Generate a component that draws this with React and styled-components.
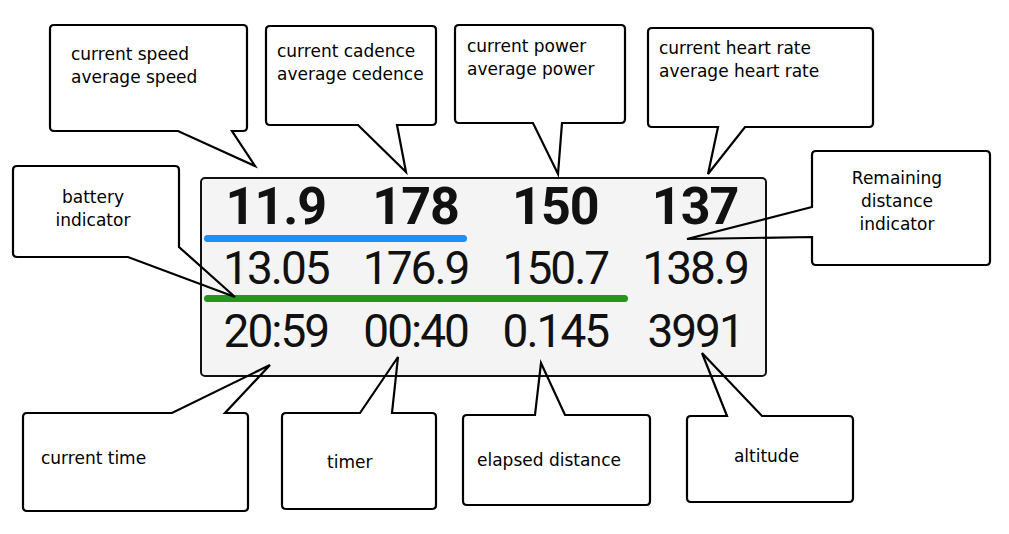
import React from "react"
import styled, { createGlobalStyle } from "styled-components"

const GlobalStyle = createGlobalStyle`
  html, body {
    margin: 0;
    padding: 0;
    background: #fff;
  }
  body {
    font-family: "DejaVu Sans", Verdana, sans-serif;
  }
`

// css
const Canvas = styled.div`
  position: relative;
  width: 1009px;
  height: 534px;
  background: #fff;
  overflow: hidden;
`

const Screen = styled.div`
  position: absolute;
  left: 200px;
  top: 177px;
  width: 567px;
  height: 200px;
  box-sizing: border-box;
  border: 2px solid #111;
  border-radius: 5px;
  background: #f4f4f4;
  padding-top: 2px;
  display: flex;
  flex-direction: column;
  font-family: Roboto, "Liberation Sans", sans-serif;
  color: #111;
`

const Row = styled.div`
  display: grid;
  grid-template-columns: repeat(4, 1fr);
  padding-left: 4px;
  margin-top: ${p => p.$gap || 0}px;
  font-size: ${p => (p.$bold ? 52 : 46)}px;
  line-height: ${p => (p.$bold ? 52 : 46)}px;
  font-weight: ${p => (p.$bold ? 700 : 400)};
  letter-spacing: ${p => (p.$bold ? -1 : -2)}px;
  text-align: center;
  white-space: nowrap;
`

const Bar = styled.div`
  margin-top: ${p => p.$gap}px;
  margin-left: 2px;
  width: ${p => p.$pct}%;
  height: 7px;
  border-radius: 4px;
  background: ${p => p.$color};
`

const Overlay = styled.svg`
  position: absolute;
  left: 0;
  top: 0;
  pointer-events: none;
`

const Label = styled.div`
  position: absolute;
  left: ${p => p.$box[0]}px;
  top: ${p => p.$box[1]}px;
  width: ${p => p.$box[2]}px;
  height: ${p => p.$box[3]}px;
  box-sizing: border-box;
  padding-top: ${p => p.$top}px;
  padding-left: ${p => p.$left || 0}px;
  padding-right: ${p => p.$right || 0}px;
  text-align: ${p => p.$align || "left"};
  font-family: "DejaVu Sans", Verdana, sans-serif;
  font-size: 17px;
  line-height: 23px;
  color: #000;
  white-space: nowrap;
`

const rows = [
  ["11.9", "178", "150", "137"],
  ["13.05", "176.9", "150.7", "138.9"],
  ["20:59", "00:40", "0.145", "3991"],
]

const callouts = [
  { box: [50, 25, 197, 106], tail: { side: "bottom", a: 178, b: 232, tip: [255, 166] }, lines: ["current speed", "average speed"], top: 18, left: 21 },
  { box: [266, 26, 170, 99], tail: { side: "bottom", a: 358, b: 397, tip: [406, 172] }, lines: ["current cadence", "average cedence"], top: 14, left: 11 },
  { box: [455, 25, 170, 98], tail: { side: "bottom", a: 533, b: 562, tip: [558, 174] }, lines: ["current power", "average power"], top: 10, left: 12 },
  { box: [648, 28, 225, 99], tail: { side: "bottom", a: 718, b: 745, tip: [708, 174] }, lines: ["current heart rate", "average heart rate"], top: 9, left: 11 },
  { box: [812, 151, 178, 114], tail: { side: "left", a: 207, b: 237, tip: [687, 239] }, lines: ["Remaining", "distance", "indicator"], top: 16, right: 8, align: "center" },
  { box: [13, 166, 166, 91], tail: { side: "corner", a: 247, b: 128, tip: [235, 297] }, lines: ["battery", "indicator"], top: 20, right: 6, align: "center" },
  { box: [23, 413, 225, 98], tail: { side: "top", a: 172, b: 225, tip: [270, 365] }, lines: ["current time"], top: 34, left: 18 },
  { box: [282, 413, 154, 96], tail: { side: "top", a: 360, b: 392, tip: [398, 357] }, lines: ["timer"], top: 38, left: 45 },
  { box: [463, 415, 187, 90], tail: { side: "top", a: 535, b: 565, tip: [541, 363] }, lines: ["elapsed distance"], top: 34, left: 14 },
  { box: [687, 416, 166, 86], tail: { side: "top", a: 727, b: 762, tip: [702, 353] }, lines: ["altitude"], top: 29, right: 7, align: "center" },
]

// outline of a speech bubble: rounded box with the tail cut into one side
function bubblePath([x, y, w, h], t, r = 4) {
  const R = x + w
  const B = y + h
  const tip = `${t.tip[0]},${t.tip[1]}`
  let d = `M${x + r},${y}`
  if (t.side === "top") d += ` L${t.a},${y} L${tip} L${t.b},${y}`
  d += ` L${R - r},${y} Q${R},${y} ${R},${y + r}`
  if (t.side === "right") d += ` L${R},${t.a} L${tip} L${R},${t.b}`
  if (t.side === "corner") {
    d += ` L${R},${t.a} L${tip} L${t.b},${B}`
  } else {
    d += ` L${R},${B - r} Q${R},${B} ${R - r},${B}`
    if (t.side === "bottom") d += ` L${t.b},${B} L${tip} L${t.a},${B}`
  }
  d += ` L${x + r},${B} Q${x},${B} ${x},${B - r}`
  if (t.side === "left") d += ` L${x},${t.b} L${tip} L${x},${t.a}`
  d += ` L${x},${y + r} Q${x},${y} ${x + r},${y} Z`
  return d
}

export default function App() {
  return (
    <Canvas>
      <GlobalStyle />
      <Screen>
        <Row $bold>
          {rows[0].map(v => <div key={v}>{v}</div>)}
        </Row>
        <Bar $gap={2} $pct={46.8} $color="#1e8ff5" />
        <Row $gap={3}>
          {rows[1].map(v => <div key={v}>{v}</div>)}
        </Row>
        <Bar $gap={4} $pct={75.3} $color="#23961c" />
        <Row $gap={6}>
          {rows[2].map(v => <div key={v}>{v}</div>)}
        </Row>
      </Screen>

      <Overlay width="1009" height="534" viewBox="0 0 1009 534">
        {callouts.map((c, i) => (
          <path key={i} d={bubblePath(c.box, c.tail)} fill="none" stroke="#000" strokeWidth="2.2" strokeLinejoin="miter" />
        ))}
      </Overlay>

      {callouts.map((c, i) => (
        <Label key={i} $box={c.box} $top={c.top} $left={c.left} $right={c.right} $align={c.align}>
          {c.lines.map(l => <div key={l}>{l}</div>)}
        </Label>
      ))}
    </Canvas>
  )
}
